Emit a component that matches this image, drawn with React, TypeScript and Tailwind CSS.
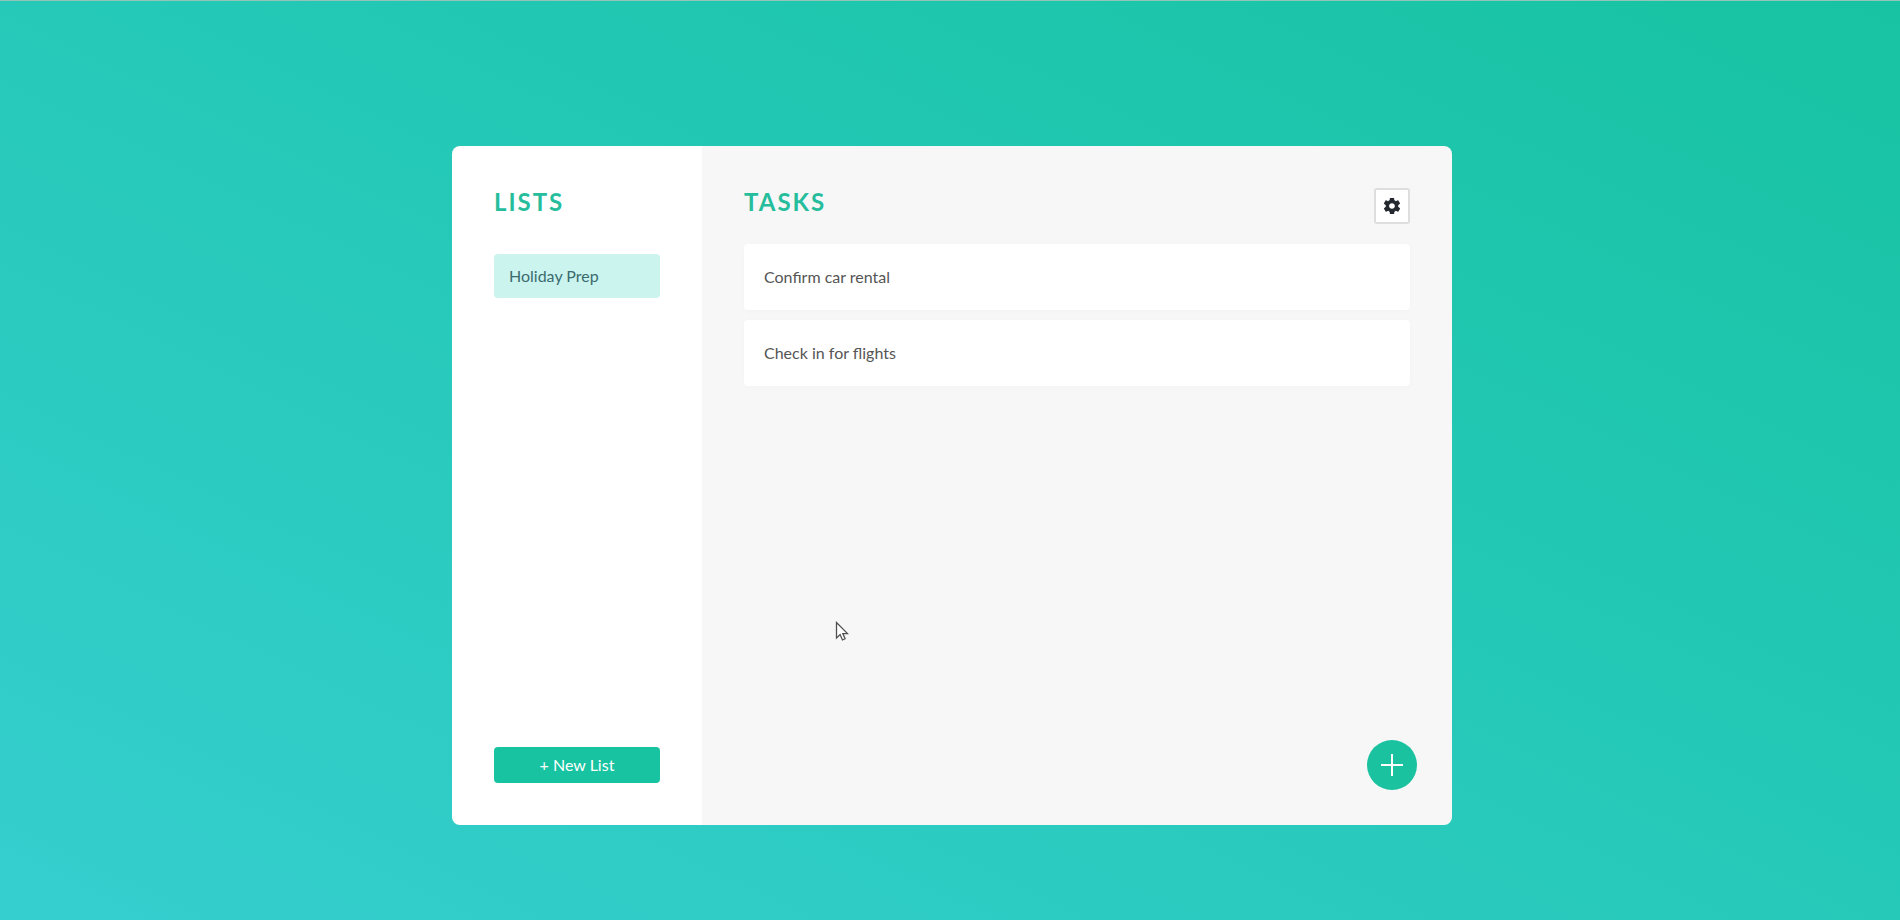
import { IoMdSettings } from "react-icons/io";

const lists = ["Holiday Prep"];
const tasks = ["Confirm car rental", "Check in for flights"];

function Heading({ children }: { children: string }) {
  return (
    <h1 className="font-['Lato',sans-serif] text-2xl leading-7 font-bold tracking-[2px] text-[#25bd9c]">
      {children}
    </h1>
  );
}

function Sidebar() {
  return (
    <aside className="flex w-1/4 flex-col bg-white p-[42px]">
      <Heading>LISTS</Heading>
      <nav className="mt-[38px] flex flex-1 flex-col gap-2">
        {lists.map((name) => (
          <a
            key={name}
            href="#list"
            className="flex h-11 items-center rounded bg-[#cbf4ef] px-[15px] text-[#3b6b6d]"
          >
            {name}
          </a>
        ))}
      </nav>
      <button type="button" className="h-9 rounded bg-[#18c3a1] text-center text-white">
        + New List
      </button>
    </aside>
  );
}

function TaskBoard() {
  return (
    <section className="relative flex flex-1 flex-col bg-[#f7f7f7] p-[42px]">
      <header className="flex items-start justify-between">
        <Heading>TASKS</Heading>
        <button
          type="button"
          aria-label="Settings"
          className="flex size-9 items-center justify-center rounded-[3px] border-2 border-[#dedede] bg-white text-[#23292e]"
        >
          <IoMdSettings size={20} />
        </button>
      </header>
      <ul className="mt-5 flex flex-col gap-[10px]">
        {tasks.map((task) => (
          <li
            key={task}
            className="flex h-[66px] items-center rounded bg-white px-5 text-[#555555] shadow-[0_1px_6px_rgba(0,0,0,0.02)]"
          >
            {task}
          </li>
        ))}
      </ul>
      <button
        type="button"
        aria-label="Add task"
        className="absolute right-[35px] bottom-[35px] flex size-[50px] items-center justify-center rounded-full bg-[#1bc2a0] text-white"
      >
        <svg width="24" height="24" viewBox="0 0 24 24" stroke="currentColor" strokeWidth="2" aria-hidden="true">
          <path d="M12 1v22M1 12h22" />
        </svg>
      </button>
      <svg
        className="absolute top-[475px] left-[133px]"
        width="14"
        height="21"
        viewBox="0 0 14 21"
        fill="white"
        stroke="#505050"
        strokeWidth="1.3"
        aria-hidden="true"
      >
        <path d="M1.5 1.5v15.5l3.6-3.4 2.4 5.4 2.6-1.2-2.3-5.2h4.7z" />
      </svg>
    </section>
  );
}

export default function App() {
  return (
    <div className="flex min-h-screen items-start justify-center border-t border-[#93c4b8] pt-[145px] pb-16 pl-1 font-['Lato',sans-serif] text-base [background-image:linear-gradient(to_bottom_left,#17c3a2,#35cfcf)]">
      <main className="flex min-h-[679px] w-full max-w-[1000px] overflow-hidden rounded-lg">
        <Sidebar />
        <TaskBoard />
      </main>
    </div>
  );
}
